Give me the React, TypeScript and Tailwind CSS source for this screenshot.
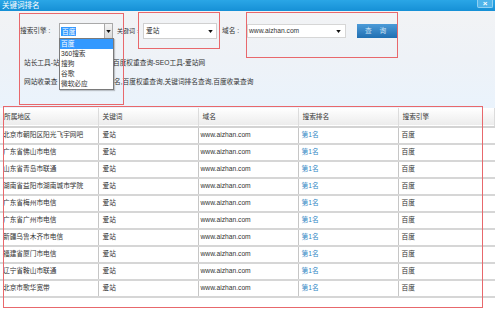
import React from "react";

const rows = [
  "北京市朝阳区阳光飞宇网吧",
  "广东省佛山市电信",
  "山东省青岛市联通",
  "湖南省益阳市湖南城市学院",
  "广东省梅州市电信",
  "广东省广州市电信",
  "新疆乌鲁木齐市电信",
  "福建省厦门市电信",
  "辽宁省鞍山市联通",
  "北京市歌华宽带",
];

const engines = ["百度", "360搜索", "搜狗", "谷歌", "微软必应"];

function Caret() {
  return (
    <svg viewBox="0 0 6 4" className="h-[3px] w-[5px]">
      <polygon points="0,0 6,0 3,4" fill="#111" />
    </svg>
  );
}

export default function App() {
  return (
    <div
      className="relative h-[312px] w-[495px] overflow-hidden bg-white text-[#333]"
      style={{ fontFamily: '"Liberation Sans", "Noto Sans CJK SC", sans-serif' }}
    >
      {/* Title bar */}
      <div className="flex h-[11px] items-center justify-between bg-gradient-to-b from-[#2aa6e6] to-[#1590d6] pl-[2px] pr-[2px]">
        <span className="text-[7.5px] leading-none text-white">关键词排名</span>
        <div className="flex h-[8px] w-[16px] items-center justify-center self-start rounded-b-[2px] border border-t-0 border-[#8fd0f2] bg-[#4fb4ea] text-[8px] leading-none font-bold text-white">
          ×
        </div>
      </div>

      {/* Search panel */}
      <div className="h-[97px] bg-gradient-to-b from-[#f2f3f5] via-[#eef2f7] to-[#eaf3fc] pt-[12px]">
        <div className="flex items-center pl-[20px] text-[6.7px] whitespace-nowrap">
          <span className="w-[39px] shrink-0">搜索引擎 :</span>
          <div className="flex h-[16px] w-[54px] shrink-0 items-center justify-between border border-[#a9a9a9] bg-white pl-[1px]">
            <span className="bg-[#3399ff] px-[1px] leading-[9px] text-white">百度</span>
            <div className="flex h-full w-[8px] items-center justify-center border-l border-[#a9a9a9] bg-gradient-to-b from-[#f4f4f4] to-[#d8d8d8]">
              <Caret />
            </div>
          </div>
          <span className="ml-[4px] w-[26px] shrink-0 text-[6px]">关键词 :</span>
          <div className="flex h-[16px] w-[74px] shrink-0 items-center justify-between border border-[#d0d0d0] bg-white pl-[2px] pr-[3px]">
            <span>爱站</span>
            <Caret />
          </div>
          <span className="ml-[5px] w-[25px] shrink-0">域名 :</span>
          <div className="flex h-[14px] w-[99px] shrink-0 items-center justify-between border border-[#d6d6d6] bg-white pl-[1px] pr-[4px]">
            <span>www.aizhan.com</span>
            <Caret />
          </div>
          <div className="ml-[11px] flex h-[14px] w-[40px] shrink-0 items-center justify-center bg-gradient-to-b from-[#4c9bd8] to-[#1f6fb2] tracking-[3px] text-[#cfe4f5]">
            查 询
          </div>
        </div>
        <div className="mt-[21px] flex pl-[24px] text-[6.7px] leading-none whitespace-nowrap">
          <span className="w-[89px]">站长工具-站</span>
          <span>百度权重查询-SEO工具-爱站网</span>
        </div>
        <div className="mt-[12px] flex pl-[24px] text-[6.7px] leading-none whitespace-nowrap">
          <span className="w-[90px]">网站收录查</span>
          <span>名,百度权重查询,关键词排名查询,百度收录查询</span>
        </div>
      </div>

      {/* Result table */}
      <table className="w-full table-fixed border-collapse text-[6.7px]">
        <colgroup>
          <col className="w-[98px]" />
          <col className="w-[100px]" />
          <col className="w-[100px]" />
          <col className="w-[100px]" />
          <col />
        </colgroup>
        <thead>
          <tr className="h-[19px] border-b-2 border-[#d3d3d3] bg-gradient-to-b from-white to-[#ececec]">
            {["所属地区", "关键词", "域名", "搜索排名", "搜索引擎"].map((h) => (
              <th key={h} className="border-r border-[#dcdcdc] pl-[4px] text-left font-normal">
                {h}
              </th>
            ))}
          </tr>
        </thead>
        <tbody>
          {rows.map((r) => (
            <tr key={r} className="h-[17px] border-b-2 border-[#d6d6d6]">
              <td className="border-r border-[#c6c6c6] pl-[3px] whitespace-nowrap">{r}</td>
              <td className="border-r border-[#c6c6c6] pl-[4px]">爱站</td>
              <td className="border-r border-[#c6c6c6] pl-[2px]">www.aizhan.com</td>
              <td className="border-r border-[#c6c6c6] pl-[3px] text-[#2f86c4]">第1名</td>
              <td className="pl-[3px]">百度</td>
            </tr>
          ))}
        </tbody>
      </table>

      {/* Open dropdown list */}
      <div className="absolute left-[59px] top-[38px] w-[55px] border border-[#7a7a7a] bg-white text-[6.7px] shadow-[1px_1px_1px_rgba(0,0,0,0.2)]">
        {engines.map((e, i) => (
          <div
            key={e}
            className={
              i === 0
                ? "h-[10px] bg-[#3399ff] pl-[1px] leading-[10px] text-white"
                : "h-[10px] pl-[1px] leading-[10px]"
            }
          >
            {e}
          </div>
        ))}
      </div>

      {/* Red annotation boxes */}
      <div className="pointer-events-none absolute left-[19px] top-[13px] h-[92px] w-[105px] border border-[#e8686c]" />
      <div className="pointer-events-none absolute left-[138px] top-[12px] h-[37px] w-[82px] border border-[#e8686c]" />
      <div className="pointer-events-none absolute left-[246px] top-[12px] h-[46px] w-[152px] border border-[#e8686c]" />
      <div className="pointer-events-none absolute left-[3px] top-[106px] h-[202px] w-[480px] border border-[#e8686c]" />
    </div>
  );
}
